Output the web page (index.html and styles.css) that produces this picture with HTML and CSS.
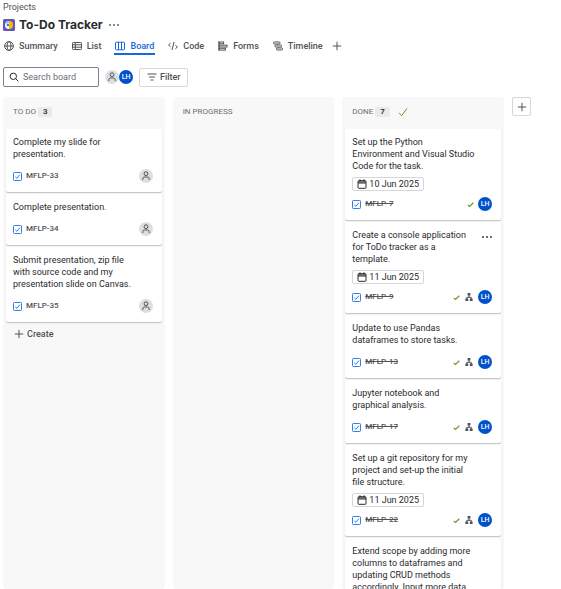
FILE: index.html
```html
<!DOCTYPE html>
<html lang="en">
<head>
<meta charset="utf-8">
<title>To-Do Tracker</title>
<link rel="stylesheet" href="styles.css">
</head>
<body>
<svg class="sprite" aria-hidden="true">
  <symbol id="person" viewBox="0 0 14 14"><circle cx="7" cy="4.7" r="1.9"/><path d="M3.8 11V9.8A1.8 1.8 0 0 1 5.6 8h2.8a1.8 1.8 0 0 1 1.8 1.8V11"/></symbol>
  <symbol id="task" viewBox="0 0 9 9"><rect x=".5" y=".5" width="8" height="8" rx=".8"/><path d="M2.3 4.8l1.6 1.5 3-3.7"/></symbol>
  <symbol id="check" viewBox="0 0 10 10"><path d="M1 5.8l2.7 2.8L9 1.4"/></symbol>
  <symbol id="check-small" viewBox="0 0 7 7"><path d="M.8 3.8l1.7 1.7L6.3 1.8"/></symbol>
  <symbol id="plus" viewBox="0 0 10 10"><path d="M5 .8v8.4M.8 5h8.4"/></symbol>
  <symbol id="dots" viewBox="0 0 12 4"><circle cx="2" cy="2" r=".9"/><circle cx="6" cy="2" r=".9"/><circle cx="10" cy="2" r=".9"/></symbol>
  <symbol id="calendar" viewBox="0 0 10 10"><rect x="1" y="1.7" width="8" height="7.6" rx=".8"/><path d="M1 4h8M1.2 2.9h7.6M3 .3v2M7 .3v2"/></symbol>
  <symbol id="tree" viewBox="0 0 10 10"><path d="M5 3v2.3M2.8 7V5.3h4.4V7"/><path class="solid" d="M3.6 1h2.8v2.6H3.6zM1.4 6.4h2.8V9H1.4zM5.8 6.4h2.8V9H5.8z"/></symbol>
</svg>

<header class="header">
  <a class="crumb" href="#">Projects</a>
  <div class="title-row">
    <svg class="logo" viewBox="0 0 12 12" aria-hidden="true"><rect width="12" height="12" rx="1.5" fill="#6554c0"/><path d="M6 2a4 4 0 0 0 0 8z" fill="#fff"/><path d="M6 2a4 4 0 0 1 0 8z" fill="#ffc400"/><path d="M2.2 4.8A4 4 0 0 1 6 2v2z" fill="#79c8f5"/><circle cx="4.9" cy="6" r="1.3" fill="#2684ff"/><path d="M7 4.6L10.6 6 7 7.6z" fill="#ffab00"/></svg>
    <h1>To-Do Tracker</h1>
    <button class="bare" aria-label="More actions"><svg class="icon dots"><use href="#dots"/></svg></button>
  </div>
  <nav class="tabs">
    <a href="#"><svg class="icon tab-icon" viewBox="0 0 10 10"><circle cx="5" cy="5" r="4.4"/><ellipse cx="5" cy="5" rx="2" ry="4.4"/><path d="M.6 5h8.8"/></svg>Summary</a>
    <a href="#"><svg class="icon tab-icon" viewBox="0 0 10 10"><rect x=".5" y="1.5" width="9" height="7" rx=".8"/><path d="M.5 3.8h9M.5 6.2h9M3.3 1.5v7"/></svg>List</a>
    <a href="#" class="active" aria-current="page"><svg class="icon tab-icon" viewBox="0 0 10 10"><rect x=".5" y="1.2" width="9" height="7.6" rx=".8"/><path d="M3.5 1.2v7.6M6.5 1.2v7.6"/></svg>Board</a>
    <a href="#"><svg class="icon tab-icon" viewBox="0 0 10 10"><path d="M2.6 2.2L.6 4l2 1.8M6 1L4 9M7.4 4.2l2 1.8-2 1.8"/></svg>Code</a>
    <a href="#"><svg class="icon tab-icon" viewBox="0 0 10 10"><path d="M1 .5v9"/><rect x="1" y="1" width="4.6" height="1.8"/><rect x="1" y="4.2" width="8" height="1.8"/><rect x="1" y="7.3" width="6.4" height="1.8"/></svg>Forms</a>
    <a href="#"><svg class="icon tab-icon" viewBox="0 0 10 10"><rect x=".5" y="1" width="6.5" height="2" rx=".8"/><rect x="2" y="4" width="6.5" height="2" rx=".8"/><rect x="3.5" y="7" width="6" height="2" rx=".8"/></svg>Timeline</a>
    <button class="bare" aria-label="Add view"><svg class="icon tab-icon"><use href="#plus"/></svg></button>
  </nav>
</header>

<div class="toolbar">
  <label class="search">
    <svg class="icon tab-icon" viewBox="0 0 10 10"><circle cx="4.3" cy="4.3" r="3.2"/><path d="M6.7 6.7l2.6 2.6"/></svg>
    <input type="text" placeholder="Search board" aria-label="Search board">
  </label>
  <div class="people">
    <span class="avatar"><svg class="icon"><use href="#person"/></svg></span>
    <span class="avatar user">LH</span>
  </div>
  <button class="filter"><svg class="icon tab-icon" viewBox="0 0 10 10"><path d="M.5 2h9M2 5h6M3.5 8h3"/></svg>Filter</button>
</div>

<main class="board">
  <section class="column">
    <h2>TO DO <span class="count">3</span></h2>
    <article class="card">
      <p>Complete my slide for presentation.</p>
      <footer><svg class="icon task"><use href="#task"/></svg><a class="key" href="#">MFLP-33</a><span class="avatar"><svg class="icon"><use href="#person"/></svg></span></footer>
    </article>
    <article class="card">
      <p>Complete presentation.</p>
      <footer><svg class="icon task"><use href="#task"/></svg><a class="key" href="#">MFLP-34</a><span class="avatar"><svg class="icon"><use href="#person"/></svg></span></footer>
    </article>
    <article class="card">
      <p>Submit presentation, zip file with source code and my presentation slide on Canvas.</p>
      <footer><svg class="icon task"><use href="#task"/></svg><a class="key" href="#">MFLP-35</a><span class="avatar"><svg class="icon"><use href="#person"/></svg></span></footer>
    </article>
    <button class="bare create"><svg class="icon tab-icon"><use href="#plus"/></svg>Create</button>
  </section>

  <section class="column">
    <h2>IN PROGRESS</h2>
  </section>

  <section class="column">
    <h2>DONE <span class="count">7</span><svg class="icon check large"><use href="#check"/></svg></h2>
    <article class="card done">
      <p>Set up the Python<br>Environment and Visual Studio Code for the task.</p>
      <time><svg class="icon tab-icon"><use href="#calendar"/></svg>10 Jun 2025</time>
      <footer><svg class="icon task"><use href="#task"/></svg><a class="key" href="#">MFLP-7</a><svg class="icon check"><use href="#check-small"/></svg><span class="avatar user">LH</span></footer>
    </article>
    <article class="card done">
      <button class="bare more" aria-label="Card actions"><svg class="icon dots"><use href="#dots"/></svg></button>
      <p>Create a console application for ToDo tracker as a<br>template.</p>
      <time><svg class="icon tab-icon"><use href="#calendar"/></svg>11 Jun 2025</time>
      <footer><svg class="icon task"><use href="#task"/></svg><a class="key" href="#">MFLP-9</a><svg class="icon check"><use href="#check-small"/></svg><svg class="icon tree"><use href="#tree"/></svg><span class="avatar user">LH</span></footer>
    </article>
    <article class="card done">
      <p>Update to use Pandas dataframes to store tasks.</p>
      <footer><svg class="icon task"><use href="#task"/></svg><a class="key" href="#">MFLP-13</a><svg class="icon check"><use href="#check-small"/></svg><svg class="icon tree"><use href="#tree"/></svg><span class="avatar user">LH</span></footer>
    </article>
    <article class="card done">
      <p>Jupyter notebook and graphical analysis.</p>
      <footer><svg class="icon task"><use href="#task"/></svg><a class="key" href="#">MFLP-17</a><svg class="icon check"><use href="#check-small"/></svg><svg class="icon tree"><use href="#tree"/></svg><span class="avatar user">LH</span></footer>
    </article>
    <article class="card done">
      <p>Set up a git repository for my project and set-up the initial file structure.</p>
      <time><svg class="icon tab-icon"><use href="#calendar"/></svg>11 Jun 2025</time>
      <footer><svg class="icon task"><use href="#task"/></svg><a class="key" href="#">MFLP-22</a><svg class="icon check"><use href="#check-small"/></svg><svg class="icon tree"><use href="#tree"/></svg><span class="avatar user">LH</span></footer>
    </article>
    <article class="card done">
      <p>Extend scope by adding more columns to dataframes and updating CRUD methods accordingly. Input more data</p>
    </article>
  </section>

  <button class="add-column" aria-label="Add column"><svg class="icon tab-icon"><use href="#plus"/></svg></button>
</main>
</body>
</html>
```
FILE: styles.css
```css
* { box-sizing: border-box; }

body {
  display: flex;
  flex-direction: column;
  height: 100vh;
  margin: 0;
  overflow: hidden;
  background: #fff;
  color: #292a2e;
  font: 9px/12px Roboto, "Liberation Sans", sans-serif;
}

button, input { font: inherit; color: inherit; }
a { color: inherit; text-decoration: none; }
h1, h2, p { margin: 0; }
.sprite { display: none; }

.icon {
  display: block;
  flex: none;
  fill: none;
  stroke: currentColor;
  stroke-width: 1;
}
.tab-icon { width: 10px; height: 10px; }
.dots { width: 12px; height: 4px; fill: currentColor; stroke: none; }
.bare { padding: 0; border: 0; background: none; }

.header { padding: 1px 3px 0; color: #505258; }
.crumb { display: block; }
.title-row { display: flex; align-items: center; height: 24px; gap: 4px; }
.title-row .bare { margin-left: 1px; }
.logo { width: 12px; height: 12px; }
h1 { color: #292a2e; font: 700 12px/16px Inter, "Liberation Sans", sans-serif; }

.tabs { display: flex; gap: 12px; height: 18px; }
.tabs a, .tabs .bare { display: flex; align-items: center; gap: 5px; padding: 2px 1px 0; border-bottom: 2px solid transparent; }
.tabs a { font-weight: 500; }
.tabs a.active { color: #1868db; border-color: #1868db; }
.tabs .bare { margin-left: -5px; }

.toolbar { display: flex; align-items: center; padding: 12px 3px 10px; }
.search {
  display: flex;
  align-items: center;
  width: 96px;
  height: 20px;
  padding: 0 5px;
  gap: 4px;
  border: 1px solid #7d818a;
  border-radius: 2px;
}
.search input { width: 100%; min-width: 0; padding: 0; border: 0; outline: 0; background: none; }
.search input::placeholder { color: #6b6e76; opacity: 1; }
.people { display: flex; margin: 0 6px; }
.filter {
  display: flex;
  align-items: center;
  height: 19px;
  padding: 0 6px 0 7px;
  gap: 3px;
  border: 1px solid #d5d6da;
  border-radius: 2px;
  background: #fff;
  color: #505258;
  font-weight: 500;
}

.avatar {
  display: flex;
  align-items: center;
  justify-content: center;
  flex: none;
  width: 14px;
  height: 14px;
  border-radius: 50%;
  background: #dddee1;
  color: #505258;
}
.avatar .icon { width: 14px; height: 14px; }
.avatar.user { background: #0052cc; color: #fff; font-size: 7px; font-weight: 500; }

.board {
  display: grid;
  grid-template-columns: repeat(3, 1fr) 19px;
  gap: 8px;
  flex: 1;
  min-height: 0;
  padding: 0 30px 0 3px;
}
.column {
  display: flex;
  flex-direction: column;
  gap: 2px;
  min-height: 0;
  padding: 0 3px;
  overflow: hidden;
  border-radius: 3px;
  background: #f8f8f8;
}
h2 {
  display: flex;
  align-items: center;
  flex: none;
  height: 30px;
  padding: 0 7px;
  gap: 2px;
  color: #6b6e76;
  font-size: 8px;
  font-weight: 400;
}
.count {
  padding: 0 5px;
  border-radius: 2px;
  background: #e9eaec;
  color: #292a2e;
  line-height: 10px;
  font-weight: 600;
}
.check { width: 7px; height: 7px; color: #6a9a23; stroke-width: 1.2; }
.check.large { width: 10px; height: 10px; margin-left: 6px; stroke-width: 1; }

.card {
  position: relative;
  flex: none;
  padding: 7px 9px 9px 7px;
  border-radius: 2px;
  background: #fff;
  box-shadow: 0 1px 1px #1e1f2140;
}
.card p { max-width: 124px; }
.card time {
  display: flex;
  align-items: center;
  width: fit-content;
  height: 14px;
  margin: 5px 0 -3px;
  padding: 0 4px;
  gap: 2px;
  border: 1px solid #d5d6da;
  border-radius: 2px;
}
.card footer { display: flex; align-items: center; margin-top: 9px; gap: 4px; }
.card .task { width: 9px; height: 9px; color: #357de8; }
.key { margin-right: auto; color: #505258; font-size: 8px; font-weight: 500; }
.done .key { text-decoration: line-through; }
.tree { width: 10px; height: 10px; color: #505258; }
.solid { fill: currentColor; stroke: none; }
.more { position: absolute; top: 13px; right: 8px; }

.create { display: flex; align-items: center; width: fit-content; padding: 4px 8px; gap: 3px; color: #505258; font-weight: 500; }
.add-column {
  display: flex;
  align-items: center;
  justify-content: center;
  height: 19px;
  padding: 0;
  border: 1px solid #d5d6da;
  border-radius: 2px;
  background: #fff;
  color: #505258;
}
```
